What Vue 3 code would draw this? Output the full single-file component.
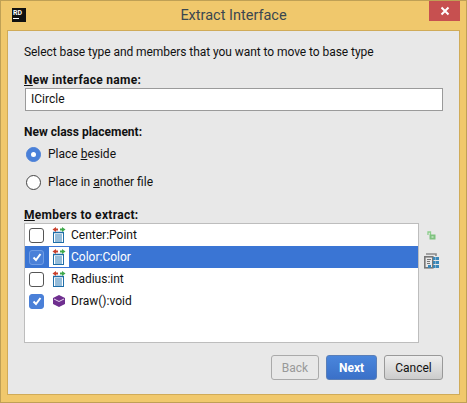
<script setup>
const members = [
  { name: 'Center:Point', checked: false, kind: 'field', selected: false },
  { name: 'Color:Color', checked: true, kind: 'field', selected: true },
  { name: 'Radius:int', checked: false, kind: 'field', selected: false },
  { name: 'Draw():void', checked: true, kind: 'method', selected: false },
]
</script>

<template>
  <div class="window">
    <div class="titlebar">
      <div class="logo"><span class="logo-text">RD</span><span class="logo-bar"></span></div>
      <div class="title">Extract Interface</div>
      <div class="close">
        <svg width="10" height="10" viewBox="0 0 10 10"><path d="M1.5 1.5 L8.5 8.5 M8.5 1.5 L1.5 8.5" stroke="#fff" stroke-width="2" fill="none"/></svg>
      </div>
    </div>
    <div class="body">
      <div class="intro">Select base type and members that you want to move to base type</div>
      <div class="label name-label"><u>N</u>ew interface name:</div>
      <div class="input">ICircle</div>
      <div class="label place-label">New class placement:</div>
      <div class="radios">
        <div class="radio-row">
          <span class="radio on"><span class="dot"></span></span>
          <span>Place <u>b</u>eside</span>
        </div>
        <div class="radio-row">
          <span class="radio"></span>
          <span>Place in <u>a</u>nother file</span>
        </div>
      </div>
      <div class="label members-label"><u>M</u>embers to extract:</div>
      <div class="members-wrap">
        <div class="list">
          <div v-for="m in members" :key="m.name" class="row" :class="{ selected: m.selected }">
            <span class="check" :class="{ checked: m.checked }">
              <svg v-if="m.checked" width="10" height="10" viewBox="0 0 10 10"><path d="M1.5 5.5 L4 8 L8.5 2" stroke="#fff" stroke-width="2" fill="none"/></svg>
            </span>
            <span class="icon-box">
              <svg v-if="m.kind === 'field'" width="14" height="16" viewBox="0 0 14 16">
                <rect x="1.5" y="5.5" width="10" height="10" fill="#fff" stroke="#1f6ea8"/>
                <path d="M1 5.5h11" stroke="#1f6ea8" stroke-width="1.5"/>
                <path d="M3 8h7M3 10h7M3 12h7M3 14h7" stroke="#2a7ab5" stroke-width="1"/>
                <path d="M3 2.5h3" stroke="#c8402c" stroke-width="2"/>
                <path d="M4 0l-3.5 2.5 3.5 2.500z" fill="#c8402c"/>
                <path d="M8 2.500h3" stroke="#3fa84a" stroke-width="2"/>
                <path d="M10 0l3.500 2.500-3.500 2.500z" fill="#3fa84a"/>
              </svg>
              <svg v-else width="14" height="14" viewBox="0 0 14 14">
                <path d="M7 1 L13 4 L13 10 L7 13 L1 10 L1 4 Z" fill="#6f2f8f"/>
                <path d="M2 5 L7 7.5 L12 5" stroke="#e8d8f0" stroke-width="1" fill="none"/>
              </svg>
            </span>
            <span class="member-name">{{ m.name }}</span>
          </div>
        </div>
        <div class="side">
          <svg class="side-lock" width="9" height="9" viewBox="0 0 9 9">
            <path d="M1 4 V1 H3.5 V4" stroke="#8ccf8c" stroke-width="1.3" fill="none"/>
            <rect x="2.500" y="3.500" width="6" height="5" fill="#7fc27f"/>
            <rect x="4.500" y="5.500" width="2" height="1" fill="#e8f5e8"/>
          </svg>
          <svg class="side-grid" width="15" height="16" viewBox="0 0 15 16">
            <path d="M2 1 H12 V3" stroke="#8a8a8a" stroke-width="1.6" fill="none"/>
            <rect x="0.800" y="3.800" width="8" height="11" fill="#e8e8e8" stroke="#777" stroke-width="1.6"/>
            <path d="M3 6.500h4M3 8.500h3M3 10.500h3" stroke="#777"/>
            <rect x="9" y="4" width="2.600" height="3" fill="#3a87b8"/><rect x="12" y="4" width="3" height="3" fill="#3a87b8"/>
            <rect x="9" y="8" width="2.600" height="3" fill="#3a87b8"/><rect x="12" y="8" width="3" height="3" fill="#3a87b8"/>
            <rect x="4" y="12" width="3" height="3" fill="#3a87b8"/><rect x="9" y="12" width="2.600" height="3" fill="#3a87b8"/><rect x="12" y="12" width="3" height="3" fill="#3a87b8"/>
          </svg>
        </div>
      </div>
      <div class="buttons">
        <button class="btn back" disabled>Back</button>
        <button class="btn next">Next</button>
        <button class="btn cancel">Cancel</button>
      </div>
    </div>
  </div>
</template>

<style scoped>
.window {
  width: 467px;
  height: 403px;
  box-sizing: border-box;
  background: #f0c86c;
  border: 1px solid #bfa055;
  display: flex;
  flex-direction: column;
  padding: 0 6px 7px;
  font-family: Roboto, "Open Sans", sans-serif;
  font-size: 12px;
  color: #111;
}
.titlebar {
  height: 29px;
  flex: none;
  position: relative;
  display: flex;
  align-items: center;
  justify-content: center;
}
.logo {
  position: absolute;
  left: 5px;
  top: 7px;
  width: 14px;
  height: 14px;
  background: #111;
  color: #fff;
}
.logo-text {
  display: block;
  font-size: 7px;
  font-weight: 700;
  line-height: 8px;
  margin-left: 1px;
  margin-top: 1px;
}
.logo-bar {
  display: block;
  width: 6px;
  height: 1px;
  margin: 1px 0 0 1px;
  background: #fff;
}
.title {
  font-size: 14.500px;
  color: #3a4750;
}
.close {
  position: absolute;
  right: 0;
  top: 0;
  width: 31px;
  height: 20px;
  background: #c75050;
  display: flex;
  align-items: center;
  justify-content: center;
}
.body {
  flex: 1;
  background: #e8e8e8;
  border: 1px solid #d0ab58;
  padding: 0 16px;
  display: flex;
  flex-direction: column;
}
.intro {
  margin-top: 12px;
  line-height: 18px;
  letter-spacing: -0.06px;
}
.label {
  font-weight: 700;
  line-height: 16px;
}
.name-label {
  margin-top: 11px;
  letter-spacing: 0.3px;
}
.input {
  margin-left: 1px;
  height: 23px;
  box-sizing: border-box;
  width: 418px;
  background: #fff;
  border: 1px solid #9a9a9a;
  padding-left: 5px;
  line-height: 21px;
  flex: none;
}
.place-label { margin-top: 13px; }
.radios {
  margin-top: 5px;
  display: flex;
  flex-direction: column;
  gap: 10px;
}
.radio-row {
  display: flex;
  align-items: center;
  height: 18px;
  padding-left: 2px;
  gap: 7px;
}
.radio {
  width: 15px;
  height: 15px;
  box-sizing: border-box;
  border: 1px solid #444;
  background: #fff;
  border-radius: 50%;
  display: flex;
  align-items: center;
  justify-content: center;
}
.radio.on {
  background: #4a80d8;
  border-color: #4a80d8;
}
.dot {
  width: 5px;
  height: 5px;
  background: #fff;
  border-radius: 50%;
}
.members-label {
  margin-top: 17px;
  line-height: 15px;
  letter-spacing: 0.3px;
}
.members-wrap {
  display: flex;
  align-items: flex-start;
}
.list {
  width: 395px;
  height: 120px;
  box-sizing: border-box;
  background: #fff;
  border: 1px solid #bdbdbd;
  display: flex;
  flex-direction: column;
  flex: none;
}
.row {
  height: 22px;
  display: flex;
  align-items: center;
}
.row.selected {
  background: #3a75d4;
  color: #fff;
}
.check {
  width: 15px;
  height: 15px;
  box-sizing: border-box;
  margin-left: 4px;
  border: 1px solid #555;
  border-radius: 3px;
  background: #fff;
  display: flex;
  align-items: center;
  justify-content: center;
}
.check.checked {
  background: #4a80d8;
  border-color: #4a80d8;
}
.row.selected .check.checked {
  border-color: #6f9ce4;
}
.icon-box {
  width: 20px;
  height: 20px;
  margin-left: 5px;
  display: flex;
  align-items: center;
  justify-content: center;
  flex: none;
}
.row.selected .icon-box {
  background: #fff;
}
.member-name {
  margin-left: 2px;
}
.side {
  display: flex;
  flex-direction: column;
  align-items: flex-start;
  padding-left: 5px;
}
.side-lock {
  margin-top: 8px;
  margin-left: 3px;
}
.side-grid {
  margin-top: 13px;
}
.buttons {
  margin-top: 12px;
  display: flex;
  justify-content: flex-end;
  gap: 7px;
}
.btn {
  font-family: inherit;
  font-size: 12px;
  height: 25px;
  box-sizing: border-box;
  border-radius: 3px;
  padding: 0;
}
.back {
  width: 48px;
  background: #e8e8e8;
  border: 1px solid #aaa;
  color: #999;
}
.next {
  width: 51px;
  background: linear-gradient(#4a86dc, #3a70c8);
  border: 1px solid #5a7fb8;
  color: #fff;
  font-weight: 700;
}
.cancel {
  width: 59px;
  background: linear-gradient(#eee, #ccc);
  border: 1px solid #999;
  color: #111;
}
</style>

<style>
body { margin: 0; }
</style>
